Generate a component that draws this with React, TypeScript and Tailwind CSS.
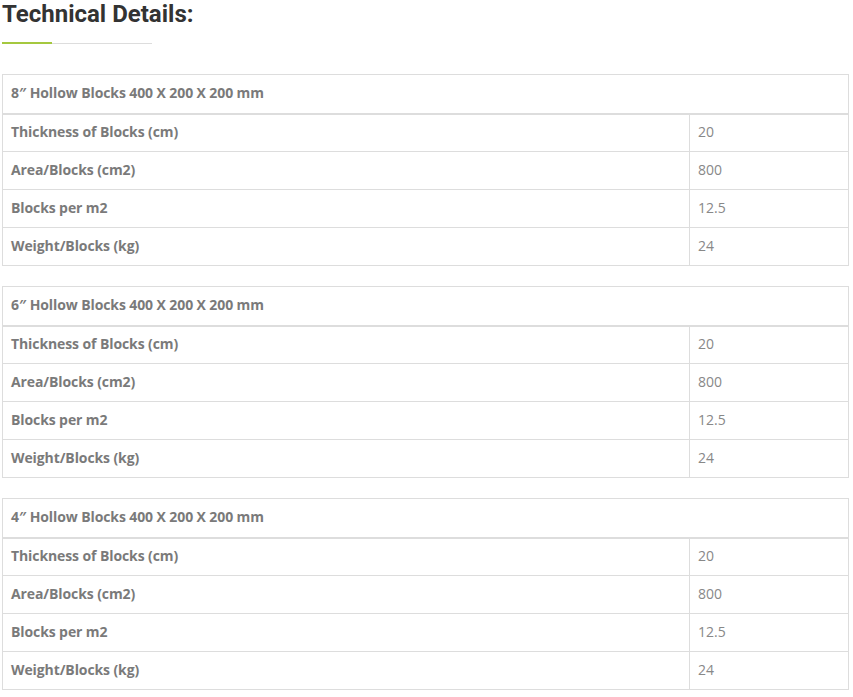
const rows = [
    ['Thickness of Blocks (cm)', '20'],
    ['Area/Blocks (cm2)', '800'],
    ['Blocks per m2', '12.5'],
    ['Weight/Blocks (kg)', '24'],
];

const tables = ['8″ Hollow Blocks 400 X 200 X 200 mm', '6″ Hollow Blocks 400 X 200 X 200 mm', '4″ Hollow Blocks 400 X 200 X 200 mm'];

function SpecTable({ title }: { title: string }) {
    return (
        <table className="w-[847px] border-collapse border border-[#dddddd] text-[14px] text-[#7a7a7a]">
            <thead>
                <tr className="h-[39px] border-b-2 border-[#dddddd]">
                    <th colSpan={2} className="px-[8px] pb-[2px] text-left font-bold tracking-[-0.1px]">
                        {title}
                    </th>
                </tr>
            </thead>
            <tbody>
                {rows.map(([label, value]) => (
                    <tr key={label} className="h-[38px] border-t border-[#dddddd]">
                        <td className="w-[687px] border-r border-[#dddddd] px-[8px] pb-[2px] font-bold tracking-[-0.1px]">{label}</td>
                        <td className="px-[8px] pb-[2px] text-[#888888]">{value}</td>
                    </tr>
                ))}
            </tbody>
        </table>
    );
}

export default function App() {
    return (
        <div className="bg-white pl-[2px] font-['Open_Sans',sans-serif]">
            <h2 className="font-['Roboto',sans-serif] text-[24px] font-bold leading-[28px] text-[#333333]">Technical Details:</h2>
            <div className="mt-[14px] flex h-[2px] w-[150px] items-end">
                <div className="h-[2px] w-[50px] bg-[#a5c83f]" />
                <div className="h-px flex-1 bg-[#dddddd]" />
            </div>
            <div className="mt-[30px] flex flex-col gap-[20px]">
                {tables.map((t) => (
                    <SpecTable key={t} title={t} />
                ))}
            </div>
        </div>
    );
}
